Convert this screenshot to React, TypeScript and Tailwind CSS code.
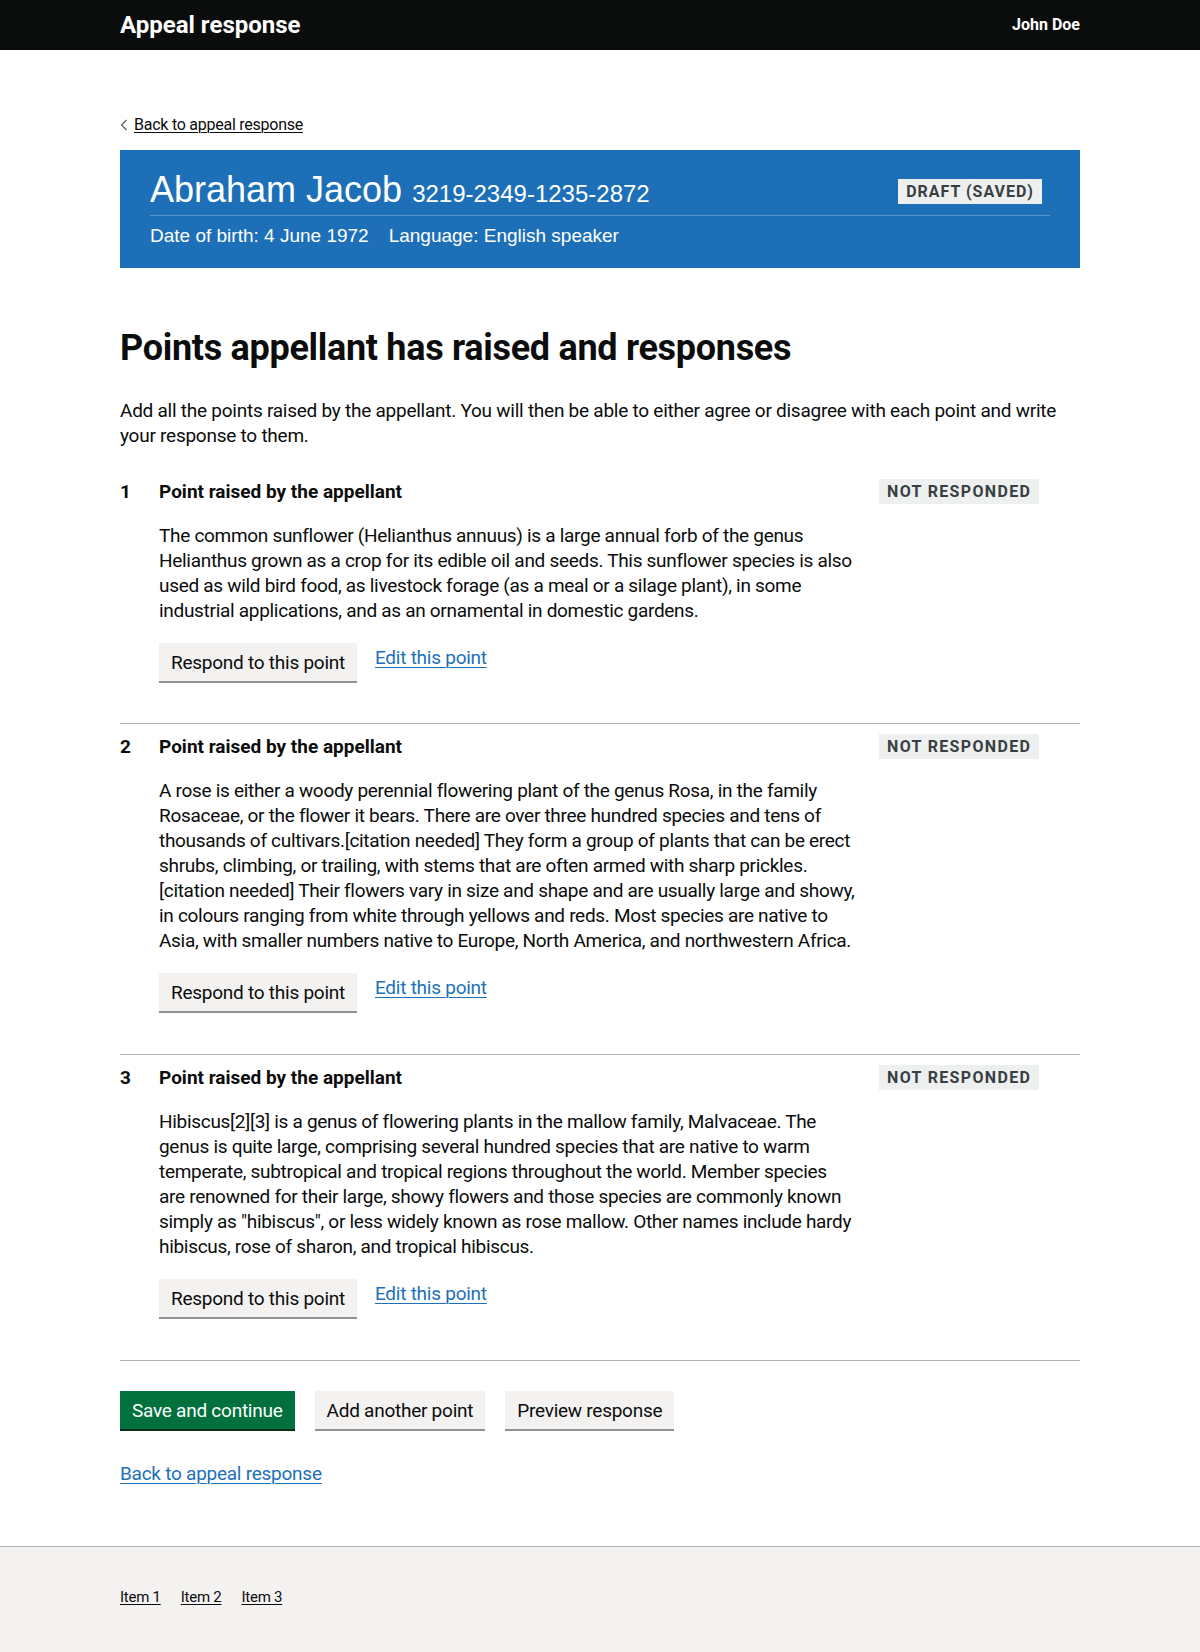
import React from "react";

const points: { n: number; lines: string[] }[] = [
  {
    n: 1,
    lines: [
      "The common sunflower (Helianthus annuus) is a large annual forb of the genus",
      "Helianthus grown as a crop for its edible oil and seeds. This sunflower species is also",
      "used as wild bird food, as livestock forage (as a meal or a silage plant), in some",
      "industrial applications, and as an ornamental in domestic gardens.",
    ],
  },
  {
    n: 2,
    lines: [
      "A rose is either a woody perennial flowering plant of the genus Rosa, in the family",
      "Rosaceae, or the flower it bears. There are over three hundred species and tens of",
      "thousands of cultivars.[citation needed] They form a group of plants that can be erect",
      "shrubs, climbing, or trailing, with stems that are often armed with sharp prickles.",
      "[citation needed] Their flowers vary in size and shape and are usually large and showy,",
      "in colours ranging from white through yellows and reds. Most species are native to",
      "Asia, with smaller numbers native to Europe, North America, and northwestern Africa.",
    ],
  },
  {
    n: 3,
    lines: [
      "Hibiscus[2][3] is a genus of flowering plants in the mallow family, Malvaceae. The",
      "genus is quite large, comprising several hundred species that are native to warm",
      "temperate, subtropical and tropical regions throughout the world. Member species",
      "are renowned for their large, showy flowers and those species are commonly known",
      'simply as "hibiscus", or less widely known as rose mallow. Other names include hardy',
      "hibiscus, rose of sharon, and tropical hibiscus.",
    ],
  },
];

function Tag({ children, wide }: { children: React.ReactNode; wide?: boolean }) {
  return (
    <span
      className={
        wide
          ? "inline-block bg-[#eeefef] text-[#383f43] font-bold text-[16px] leading-[16px] tracking-[1.35px] uppercase pt-[5px] pb-[4px] px-[8px] whitespace-nowrap"
          : "inline-block bg-[#eeefef] text-[#383f43] font-bold text-[16px] leading-[16px] tracking-[1px] uppercase pt-[5px] pb-[4px] px-[8px] whitespace-nowrap"
      }
    >
      {children}
    </span>
  );
}

function GreyButton({ children }: { children: React.ReactNode }) {
  return (
    <button
      type="button"
      className="bg-[#f3f2f1] text-[#0b0c0c] text-[19px] leading-[19px] pt-[8px] pb-[7px] px-[10px] border-2 border-transparent shadow-[0_2px_0_#929191] whitespace-nowrap"
    >
      {children}
    </button>
  );
}

export default function App() {
  return (
    <div className="min-h-screen flex flex-col bg-white text-[#0b0c0c] font-['Roboto',sans-serif] tracking-[-0.25px]">
      {/* Header */}
      <header className="bg-[#0b0c0c] h-[50px] tracking-normal">
        <div className="w-[960px] mx-auto h-full flex items-center justify-between">
          <span className="text-white font-bold text-[24px] leading-[30px]">Appeal response</span>
          <span className="text-white font-bold text-[16px] leading-[20px]">John Doe</span>
        </div>
      </header>

      <main className="w-[960px] mx-auto">
        {/* Back link */}
        <a href="#" className="mt-[65px] flex items-center gap-[6px] text-[16px] leading-[20px] text-[#0b0c0c] w-fit">
          <svg width="8" height="12" viewBox="0 0 8 12" className="shrink-0">
            <polyline points="6.5,1 1.5,6 6.5,11" fill="none" stroke="#505a5f" strokeWidth="1.2" />
          </svg>
          <span className="underline underline-offset-[2px] decoration-1">Back to appeal response</span>
        </a>

        {/* Banner */}
        <section className="mt-[15px] bg-[#1d70b8] text-white px-[30px] pt-[20px] pb-[20px] font-['Liberation_Sans',Arial,sans-serif] tracking-normal">
          <div className="flex items-end justify-between border-b border-[#5694ca] pb-[5px]">
            <div className="flex items-baseline">
              <span className="text-[36px] leading-[40px]">Abraham Jacob</span>
              <span className="text-[24px] leading-[28px] ml-[10px]">3219-2349-1235-2872</span>
            </div>
            <div className="mr-[8px] mb-[6px] font-['Roboto',sans-serif]">
              <Tag>Draft (saved)</Tag>
            </div>
          </div>
          <div className="mt-[7px] flex text-[19px] leading-[25px]">
            <span>Date of birth: 4 June 1972</span>
            <span className="ml-[20px]">Language: English speaker</span>
          </div>
        </section>

        {/* Heading */}
        <h1 className="mt-[60px] text-[36px] leading-[40px] font-bold tracking-[-0.3px]">
          Points appellant has raised and responses
        </h1>
        <p className="mt-[30px] mb-[21px] text-[19px] leading-[25px]">
          <span className="block whitespace-nowrap">
            Add all the points raised by the appellant. You will then be able to either agree or disagree with each point and write
          </span>
          <span className="block whitespace-nowrap">your response to them.</span>
        </p>

        {/* Points */}
        <div>
          {points.map((p, i) => (
            <div
              key={p.n}
              className={
                i === 0
                  ? "flex pt-[10px] pb-[42px] border-b border-[#b1b4b6]"
                  : "flex pt-[10px] pb-[43px] border-b border-[#b1b4b6]"
              }
            >
              <div className="w-[39px] shrink-0 font-bold text-[19px] leading-[25px]">{p.n}</div>
              <div className="flex-1">
                <h2 className="font-bold text-[19px] leading-[25px] tracking-normal">Point raised by the appellant</h2>
                <p className="mt-[19px] text-[19px] leading-[25px] tracking-[-0.3px]">
                  {p.lines.map((l, j) => (
                    <span key={j} className="block whitespace-nowrap">
                      {l}
                    </span>
                  ))}
                </p>
                <div className="mt-[20px] flex items-start gap-[18px]">
                  <GreyButton>Respond to this point</GreyButton>
                  <a
                    href="#"
                    className="mt-[2px] text-[19px] leading-[25px] text-[#1d70b8] underline underline-offset-[3px] decoration-1"
                  >
                    Edit this point
                  </a>
                </div>
              </div>
              <div className="w-[201px] shrink-0">
                <Tag wide>Not responded</Tag>
              </div>
            </div>
          ))}
        </div>

        {/* Bottom actions */}
        <div className="mt-[30px] flex items-start gap-[20px]">
          <button
            type="button"
            className="bg-[#00703c] text-white text-[19px] leading-[19px] pt-[8px] pb-[7px] px-[10px] border-2 border-transparent shadow-[0_2px_0_#002d18] whitespace-nowrap"
          >
            Save and continue
          </button>
          <GreyButton>Add another point</GreyButton>
          <GreyButton>Preview response</GreyButton>
        </div>

        <div className="mt-[32px] mb-[59px]">
          <a
            href="#"
            className="text-[19px] leading-[25px] text-[#1d70b8] underline underline-offset-[3px] decoration-1"
          >
            Back to appeal response
          </a>
        </div>
      </main>

      {/* Footer */}
      <footer className="flex-1 bg-[#f3f2f1] border-t border-[#b1b4b6]">
        <div className="w-[960px] mx-auto pt-[40px] pb-[45px] flex gap-[20px] text-[15px] leading-[20px]">
          <a href="#" className="underline underline-offset-[2px] decoration-1 text-[#0b0c0c]">Item 1</a>
          <a href="#" className="underline underline-offset-[2px] decoration-1 text-[#0b0c0c]">Item 2</a>
          <a href="#" className="underline underline-offset-[2px] decoration-1 text-[#0b0c0c]">Item 3</a>
        </div>
      </footer>
    </div>
  );
}
